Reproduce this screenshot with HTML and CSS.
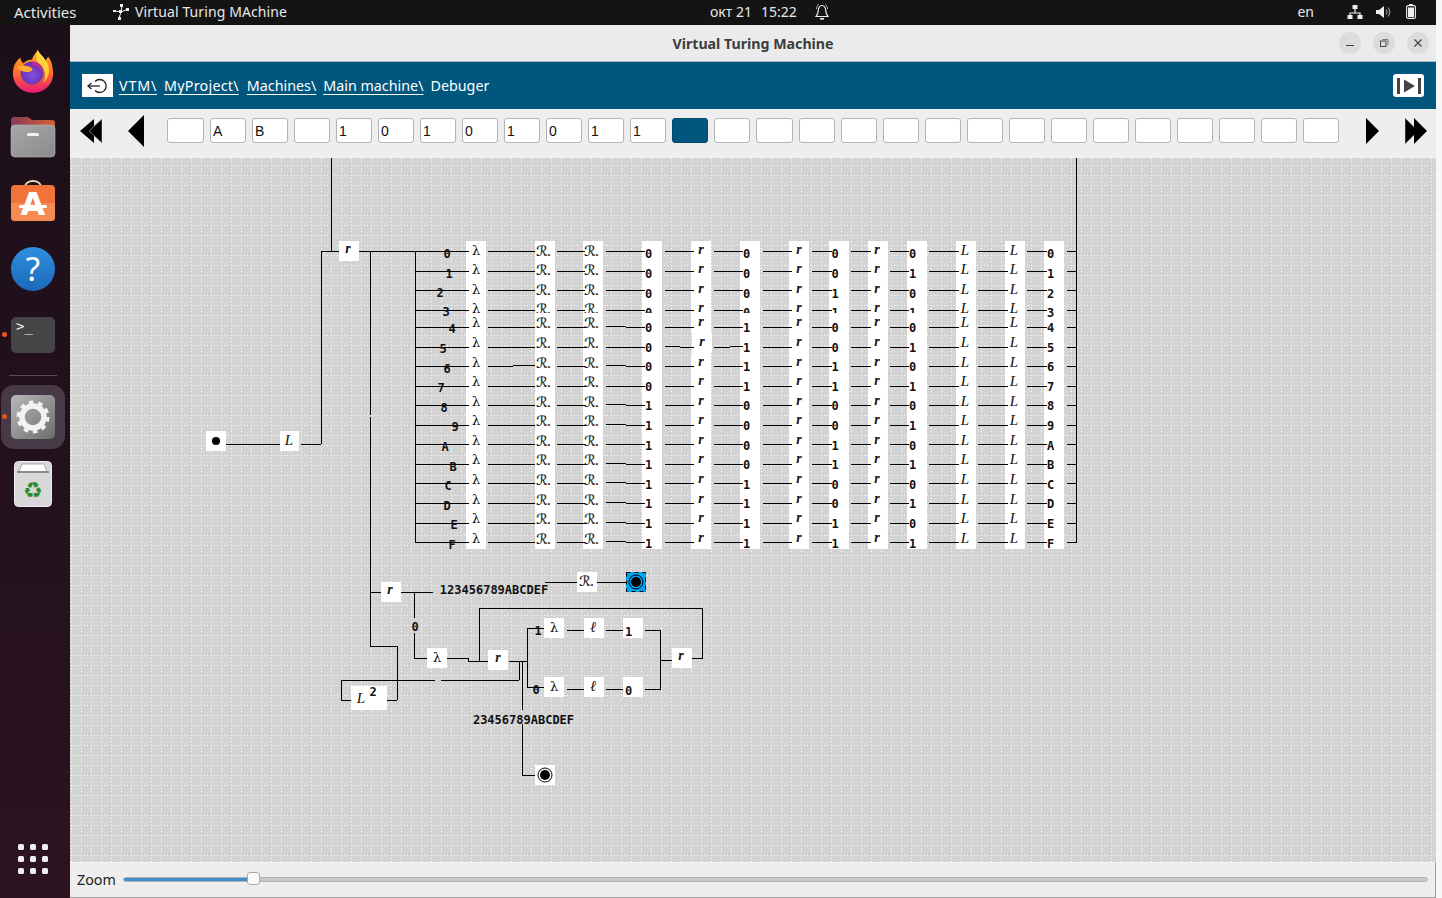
FILE: index.html
```html
<!DOCTYPE html>
<html>
  <head>
    <meta charset="UTF-8"/>
    <title>Virtual Turing Machine</title>
    <link rel="stylesheet" href="styles.css">
  </head>
  <body>
    <div class="screen">
      <header class="topbar">
        <span class="activities">Activities</span>
        <span class="appmenu">
          <svg width="18" height="18" viewBox="0 0 18 18" class="appicon">
            <path d="M2 8 L8 9 L9 3 M8 9 L15 6 M8 9 L6 15" stroke="#eee" stroke-width="1" fill="none"/>
            <g fill="#eee">
              <rect x="7" y="1" width="3" height="3"/><rect x="0" y="7" width="3" height="2"/>
              <rect x="6" y="7" width="3" height="3"/><rect x="13" y="5" width="3" height="3"/>
              <rect x="5" y="14" width="3" height="3"/>
            </g>
          </svg>
          Virtual Turing MAchine
        </span>
        <span class="clock">
          <span>окт 21</span><span class="time">15:22</span>
          <svg width="16" height="18" viewBox="0 0 16 18" class="bell">
            <path d="M8 2.5 C5 2.5 4.4 5 4.2 8 C4 11 3 12 2 13.5 H14 C13 12 12 11 11.8 8 C11.6 5 11 2.5 8 2.5 Z" fill="none" stroke="#eee" stroke-width="1.2"/>
            <path d="M2.5 6 C2.6 4 3.4 2.4 4.6 1.4 M13.5 6 C13.4 4 12.6 2.4 11.4 1.4" fill="none" stroke="#bbb" stroke-width="1"/>
            <rect x="6" y="15" width="4" height="1.6" fill="#eee"/>
          </svg>
        </span>
        <span class="tray">
          <span class="lang">en</span>
          <svg width="16" height="14" viewBox="0 0 16 14" class="net">
            <path d="M8 4 V8 M3 11 V8 H13 V11" stroke="#eee" stroke-width="1.2" fill="none"/>
            <g fill="#eee"><rect x="5.5" y="0" width="5" height="4"/><rect x="0.5" y="10" width="5" height="4"/><rect x="10.5" y="10" width="5" height="4"/></g>
          </svg>
          <svg width="16" height="14" viewBox="0 0 16 14" class="vol">
            <path d="M0 5 H3 L8 1 V13 L3 9 H0 Z" fill="#eee"/>
            <path d="M10 4.5 Q12 7 10 9.5 M12 2.5 Q15.5 7 12 11.5" fill="none" stroke="#999" stroke-width="1.2"/>
          </svg>
          <svg width="10" height="15" viewBox="0 0 10 15" class="batt">
            <rect x="3" y="0" width="4" height="2" fill="#eee"/>
            <rect x="0.6" y="1.6" width="8.8" height="12.8" rx="1.5" fill="none" stroke="#eee" stroke-width="1.1"/>
            <rect x="2" y="3.5" width="6" height="9.5" fill="#eee"/>
          </svg>
        </span>
      </header>

      <div class="desktop">
        <nav class="dock">
          <div class="slot">
            <svg width="44" height="44" viewBox="0 0 46 46">
              <defs>
                <linearGradient id="foxBody" x1="0" y1="0" x2="0" y2="1">
                  <stop offset="0" stop-color="#ffb32c"/><stop offset="0.55" stop-color="#ff6a2b"/><stop offset="1" stop-color="#e5177b"/>
                </linearGradient>
                <radialGradient id="foxCore" cx="0.5" cy="0.6" r="0.6">
                  <stop offset="0" stop-color="#7a50e0"/><stop offset="1" stop-color="#6b2fa8"/>
                </radialGradient>
              </defs>
              <path d="M2 26 C2 17 6 12 10 9 C10 12 11 14 13 15 C16 12 19 11 22 11 C23 7 26 4 28 1 C30 6 34 7 36 13 C37 10 38 9 39 8 C43 13 44 20 44 26 C44 38 34 46 23 46 C12 46 2 38 2 26 Z" fill="url(#foxBody)"/>
              <path d="M28 1 C30 6 35 8 38 15 C41 21 40 30 34 35 C38 27 35 19 29 15 C26 12 26 6 28 1 Z" fill="#ffd43a"/>
              <circle cx="22" cy="25" r="12" fill="url(#foxCore)"/>
              <path d="M6 19 C10 16 18 17 22 20 C24 22 20 24 17 24 C13 24 10 23 6 19 Z" fill="#ffab2e"/>
              <path d="M22 13 C28 13 34 18 34 26 C31 20 27 17 22 17 Z" fill="#c02c9a"/>
            </svg>
          </div>
          <div class="slot">
            <svg width="46" height="42" viewBox="0 0 46 42">
              <defs>
                <linearGradient id="folderBack" x1="0" y1="0" x2="1" y2="0">
                  <stop offset="0" stop-color="#8a3a5a"/><stop offset="1" stop-color="#d5602d"/>
                </linearGradient>
                <linearGradient id="folderFront" x1="0" y1="0" x2="1" y2="1">
                  <stop offset="0" stop-color="#a8a8a8"/><stop offset="1" stop-color="#8a8a8a"/>
                </linearGradient>
              </defs>
              <path d="M1 4 Q1 1 4 1 H18 L22 4 H42 Q45 4 45 7 V20 H1 Z" fill="url(#folderBack)"/>
              <rect x="1" y="9" width="44" height="32" rx="4" fill="url(#folderFront)" stroke="#bbb" stroke-width="0.6"/>
              <rect x="17" y="17" width="12" height="3" rx="1.5" fill="#f2f2f2"/>
            </svg>
          </div>
          <div class="slot">
            <svg width="46" height="46" viewBox="0 0 46 46">
              <path d="M15 7 C15 -1 31 -1 31 7" fill="none" stroke="#f3d5bb" stroke-width="1.8"/>
              <rect x="1" y="5" width="44" height="36" rx="4" fill="#f0743a"/>
              <path d="M1 23 H45 V37 Q45 41 41 41 H5 Q1 41 1 37 Z" fill="#f58a52"/>
              <text x="23" y="35" class="storeletter">A</text>
              <rect x="9" y="25" width="28" height="3" rx="1.5" fill="#fff"/>
            </svg>
          </div>
          <div class="slot">
            <svg width="46" height="46" viewBox="0 0 46 46">
              <defs>
                <linearGradient id="helpBlue" x1="0" y1="0" x2="0" y2="1">
                  <stop offset="0" stop-color="#2f8fe0"/><stop offset="1" stop-color="#1d68b8"/>
                </linearGradient>
              </defs>
              <circle cx="23" cy="23" r="22" fill="url(#helpBlue)"/>
              <text x="23" y="35" class="helpmark">?</text>
            </svg>
          </div>
          <div class="slot">
            <span class="running"></span>
            <div class="termicon"><span>&gt;_</span></div>
          </div>
          <hr class="dockline"/>
          <div class="slot slot-active">
            <span class="running"></span>
            <div class="gearicon">
              <svg width="34" height="34" viewBox="0 0 34 34">
                <circle cx="17" cy="17" r="11" fill="none" stroke="#f2f2f2" stroke-width="5.5"/>
                <circle cx="17" cy="17" r="14.5" fill="none" stroke="#f2f2f2" stroke-width="4" stroke-dasharray="4.55 4.56"/>
              </svg>
            </div>
          </div>
          <div class="slot">
            <svg width="38" height="46" viewBox="0 0 38 46">
              <rect x="0.5" y="0.5" width="37" height="45" rx="4" fill="#d8d8d8" stroke="#eee"/>
              <path d="M5 11 L8 3 H30 L33 11 Z" fill="#fff" stroke="#999" stroke-width="0.8"/>
              <rect x="3" y="10" width="32" height="2" fill="#8a8a8a"/>
              <text x="19" y="37" class="recycle">♻</text>
            </svg>
          </div>
          <div class="appgrid">
            <i></i><i></i><i></i><i></i><i></i><i></i><i></i><i></i><i></i>
          </div>
        </nav>

        <main class="window">
          <div class="titlebar">
            <span class="wintitle">Virtual Turing Machine</span>
            <div class="winbtns">
              <span class="winbtn"><svg width="10" height="10" viewBox="0 0 10 10"><rect x="1" y="7" width="8" height="1" fill="#444"/></svg></span>
              <span class="winbtn"><svg width="10" height="10" viewBox="0 0 10 10"><rect x="1.5" y="3" width="5.5" height="5.5" fill="none" stroke="#444"/><path d="M3.5 1.5 H9 V7" fill="none" stroke="#777"/></svg></span>
              <span class="winbtn"><svg width="10" height="10" viewBox="0 0 10 10"><path d="M1.5 1.5 L8.5 8.5 M8.5 1.5 L1.5 8.5" stroke="#444" stroke-width="1.2"/></svg></span>
            </div>
          </div>

          <div class="pathbar">
            <button class="backbtn">
              <svg width="24" height="16" viewBox="0 0 24 16">
                <path d="M9 3.5 A6.5 6.5 0 1 1 9 12.5" fill="none" stroke="#222" stroke-width="1.3"/>
                <path d="M2 8 H14" stroke="#222" stroke-width="1.3"/>
                <path d="M5.5 5 L2 8 L5.5 11" fill="none" stroke="#222" stroke-width="1.3"/>
              </svg>
            </button>
            <a class="crumb crumb-vtm">VTM\</a>
            <a class="crumb crumb-project">MyProject\</a>
            <a class="crumb crumb-machines">Machines\</a>
            <a class="crumb crumb-main">Main machine\</a>
            <span class="crumb-here">Debuger</span>
            <button class="stepbtn">
              <svg width="24" height="16" viewBox="0 0 24 16">
                <rect x="0" y="0" width="3" height="16" fill="#444"/>
                <rect x="21" y="0" width="3" height="16" fill="#444"/>
                <path d="M7 1.5 L18 8 L7 14.5 Z" fill="#444"/>
              </svg>
            </button>
          </div>

          <div class="tapebar">
            <svg class="arrow arrow-ff" width="22" height="24" viewBox="0 0 22 24">
              <path d="M14 0 L0 12 L14 24 Z" fill="#000"/>
              <path d="M22 0 L9 12 L22 24 Z" fill="#000" stroke="#888" stroke-width="0.8"/>
            </svg>
            <svg class="arrow arrow-one" width="16" height="32" viewBox="0 0 16 32"><path d="M16 0 L0 16 L16 32 Z" fill="#000"/></svg>
            <div class="tape">
              <span class="cell cell-wide"></span>
              <span class="cell">A</span>
              <span class="cell">B</span>
              <span class="cell"></span>
              <span class="cell">1</span>
              <span class="cell">0</span>
              <span class="cell">1</span>
              <span class="cell">0</span>
              <span class="cell">1</span>
              <span class="cell">0</span>
              <span class="cell">1</span>
              <span class="cell">1</span>
              <span class="cell cell-head"></span>
              <span class="cell"></span>
              <span class="cell cell-wide"></span>
              <span class="cell"></span><span class="cell"></span><span class="cell"></span>
              <span class="cell"></span><span class="cell"></span><span class="cell"></span>
              <span class="cell"></span><span class="cell"></span><span class="cell"></span>
              <span class="cell"></span><span class="cell"></span><span class="cell"></span>
              <span class="cell"></span>
            </div>
            <svg class="arrow arrow-next" width="13" height="26" viewBox="0 0 13 26"><path d="M0 0 L13 13 L0 26 Z" fill="#000"/></svg>
            <svg class="arrow arrow-end" width="22" height="26" viewBox="0 0 22 26">
              <path d="M0 0 L13 13 L0 26 Z" fill="#000" stroke="#888" stroke-width="0.8"/>
              <path d="M9 0 L22 13 L9 26 Z" fill="#000"/>
            </svg>
          </div>

          <svg id="board" class="board" width="1366" height="704" viewBox="70 158 1366 704">
            <defs>
              <pattern id="dots" x="70" y="160" width="10" height="10" patternUnits="userSpaceOnUse">
                <g fill="#fff">
                  <rect x="1" y="5" width="1" height="1"/><rect x="4" y="5" width="1" height="1"/>
                  <rect x="7" y="5" width="1" height="1"/>
                  <rect x="1" y="1" width="1" height="1"/><rect x="1" y="8" width="1" height="1"/>
                </g>
              </pattern>
            </defs>
            <rect x="70" y="158" width="1366" height="704" fill="#d3d3d3"/>
            <rect x="70" y="158" width="1366" height="704" fill="url(#dots)"/>
          </svg>

          <div class="zoombar">
            <span class="zoomlabel">Zoom</span>
            <div class="slider">
              <div class="slider-fill"></div>
              <div class="slider-thumb"></div>
            </div>
          </div>
        </main>
      </div>
    </div>
    <script src="diagram.js"></script>
  </body>
</html>
```

FILE: styles.css
```css
html, body { padding: 0; margin: 0; background: #f7f7f7; }
body { font-family: "Noto Sans", "Open Sans", sans-serif; }
svg { display: block; }

.screen {
    width: 1436px;
    height: 898px;
    display: flex;
    flex-direction: column;
    overflow: hidden;
}

/* top bar */
.topbar {
    height: 25px;
    box-sizing: border-box;
    padding-bottom: 2px;
    background: #141414;
    color: #e8e8e8;
    font-size: 14px;
    display: flex;
    align-items: center;
    flex: none;
}
.activities { margin-left: 14px; width: 99px; font-size: 15px; }
.appmenu { display: flex; align-items: center; letter-spacing: .1px; }
.appicon { margin-right: 4px; }
.clock {
    display: flex;
    align-items: center;
    margin-left: 423px;
}
.time { margin-left: 9px; }
.bell { margin-left: 17px; }
.tray { display: flex; align-items: center; margin-left: auto; margin-right: 20px; }
.lang { margin-right: 33px; }
.net { margin-right: 13px; }
.vol { margin-right: 14px; }

.desktop { flex: 1; display: flex; min-height: 0; }

/* dock */
.dock {
    width: 70px;
    flex: none;
    background: linear-gradient(#1b0f19, #2c1322);
    display: flex;
    flex-direction: column;
    align-items: center;
    padding: 13px 4px 0 0;
    box-sizing: border-box;
}
.slot {
    width: 64px;
    height: 66px;
    display: flex;
    align-items: center;
    justify-content: center;
    position: relative;
    flex: none;
}
.slot-active {
    background: #483946;
    border-radius: 13px;
    height: 64px;
    margin-bottom: 2px;
}
.running {
    position: absolute;
    left: 1px;
    top: 50%;
    width: 5px;
    height: 5px;
    margin-top: -3px;
    border-radius: 50%;
    background: #e95420;
}
.termicon {
    width: 44px;
    height: 36px;
    background: #454545;
    border-radius: 5px;
    box-sizing: border-box;
    color: #f5f5f5;
    font: 14px "DejaVu Sans Mono", monospace;
    padding: 1px 0 0 5px;
}
.gearicon {
    width: 44px;
    height: 44px;
    border-radius: 5px;
    background: linear-gradient(135deg, #b8b8b8, #6d6d6d);
    display: flex;
    align-items: center;
    justify-content: center;
}
.dockline {
    width: 48px;
    margin: 7px 0 9px;
    border: 0;
    border-top: 1px solid #5b4b57;
}
.storeletter { font: bold 32px "DejaVu Sans", sans-serif; fill: #fff; text-anchor: middle; }
.helpmark { font: 33px "Noto Sans", sans-serif; fill: #fff; text-anchor: middle; }
.recycle { font: 22px "DejaVu Sans", sans-serif; fill: #2c8a2c; text-anchor: middle; }
.appgrid {
    margin-top: auto;
    margin-bottom: 24px;
    display: grid;
    grid-template-columns: repeat(3, 6px);
    gap: 6px;
}
.appgrid i { width: 6px; height: 6px; border-radius: 1.5px; background: #efefef; display: block; }

/* window */
.window {
    flex: 1;
    min-width: 0;
    display: flex;
    flex-direction: column;
    background: #eee;
}
.titlebar {
    height: 37px;
    flex: none;
    background: #ebebeb;
    display: flex;
    align-items: center;
    justify-content: center;
    position: relative;
    box-sizing: border-box;
    border-bottom: 1px solid #a9b7bf;
}
.wintitle { font-size: 14.2px; font-weight: 700; color: #3d3d3d; }
.winbtns {
    position: absolute;
    right: 7px;
    top: 7px;
    display: flex;
    gap: 12px;
}
.winbtn {
    width: 22px;
    height: 22px;
    border-radius: 50%;
    background: #dcdcdc;
    display: flex;
    align-items: center;
    justify-content: center;
}

.pathbar {
    height: 47px;
    flex: none;
    background: #00567c;
    display: flex;
    align-items: center;
    padding: 0 12px;
    color: #fff;
    font-size: 14.3px;
}
.backbtn {
    width: 31px;
    height: 23px;
    padding: 0;
    border: 0;
    background: #fff;
    display: flex;
    align-items: center;
    justify-content: center;
}
.crumb { text-decoration: underline; text-underline-offset: 3px; }
.crumb-vtm { margin-left: 6px; letter-spacing: .8px; }
.crumb-project { margin-left: 7px; letter-spacing: .25px; }
.crumb-machines { margin-left: 8px; }
.crumb-main { margin-left: 7px; }
.crumb-here { margin-left: 7px; }
.stepbtn {
    margin-left: auto;
    width: 31px;
    height: 23px;
    padding: 0;
    border: 0;
    border-radius: 3px;
    background: #fff;
    display: flex;
    align-items: center;
    justify-content: center;
}

.tapebar {
    height: 49px;
    flex: none;
    box-sizing: border-box;
    padding-bottom: 6px;
    background: #eee;
    display: flex;
    align-items: center;
}
.arrow { flex: none; }
.arrow-ff { margin-left: 10px; }
.arrow-one { margin-left: 26px; }
.tape { display: flex; gap: 6px; margin-left: 23px; }
.arrow-next { margin-left: 27px; }
.arrow-end { margin-left: 26px; }
.cell {
    width: 36px;
    height: 25px;
    box-sizing: border-box;
    border: 1px solid #b4b4b4;
    border-radius: 3px;
    background: #fff;
    font: 14px/24px "Liberation Sans", sans-serif;
    color: #111;
    padding-left: 2px;
}
.cell-wide { width: 37px; }
.cell-head { background: #00567c; border-color: #004a6c; }

.board { flex: none; }
.wires { fill: none; stroke: #000; stroke-width: 1; shape-rendering: crispEdges; }
.mark { font: bold 12px "DejaVu Sans Mono", monospace; fill: #111; text-anchor: middle; }
.sym { fill: #111; text-anchor: middle; }
.sym-r { font: italic bold 14px "Liberation Serif", serif; }
.sym-lambda { font: 13px "DejaVu Serif", serif; }
.sym-script { font: italic 14px "DejaVu Sans", sans-serif; stroke: #111; stroke-width: .2; }
.sym-big-l { font: italic 15px "Liberation Serif", serif; }
.sym-small { font: italic 15px "Liberation Serif", serif; }

.zoombar {
    flex: 1;
    min-height: 0;
    box-sizing: border-box;
    background: #eee;
    border-top: 1px solid #f6f6f6;
    border-right: 1px solid #999;
    border-bottom: 1px solid #a5a5a5;
    padding: 0 0 1px 7px;
    display: flex;
    align-items: center;
}
.zoomlabel { font-size: 14.3px; color: #222; width: 46px; margin-bottom: 1px; }
.slider {
    width: 1305px;
    height: 5px;
    background: #c9c9c9;
    border: 1px solid #b3b3b3;
    border-radius: 3px;
    box-sizing: border-box;
    position: relative;
}
.slider-fill {
    width: 130px;
    height: 100%;
    background: #3b8ed0;
    border-radius: 3px;
}
.slider-thumb {
    position: absolute;
    left: 123px;
    top: -6px;
    width: 13px;
    height: 13px;
    box-sizing: border-box;
    background: #fafafa;
    border: 1px solid #aaa;
    border-radius: 3px;
}
```

FILE: diagram.js
```js
// builds the machine diagram on the board svg, all coords are screen pixels
var NS = 'http://www.w3.org/2000/svg';
var board = document.getElementById('board');

function add(tag, attrs, txt) {
    var el = document.createElementNS(NS, tag);
    for (var k in attrs) el.setAttribute(k, attrs[k]);
    if (txt !== undefined) el.textContent = txt;
    board.appendChild(el);
    return el;
}
function box(x, y, w, h, fill) {
    add('rect', { x: x, y: y, width: w, height: h, fill: fill || '#fff' });
}
function hl(x1, x2, y) { return 'M' + x1 + ' ' + (y + .5) + 'H' + x2; }
function vl(x, y1, y2) { return 'M' + (x + .5) + ' ' + y1 + 'V' + y2; }
function wires(parts) { add('path', { d: parts.join(''), 'class': 'wires' }); }
function mark(x, y, s) { add('text', { x: x, y: y, 'class': 'mark' }, s); }
function sym(kind, x, y) {
    if (kind == 'r') add('text', { x: x, y: y + 3, 'class': 'sym sym-r' }, 'r');
    if (kind == 'l') add('text', { x: x, y: y + 4, 'class': 'sym sym-lambda' }, 'λ');
    if (kind == 'R') add('text', { x: x, y: y + 5, 'class': 'sym sym-script' }, 'ℛ.');
    if (kind == 'L') add('text', { x: x, y: y + 4, 'class': 'sym sym-big-l' }, 'L');
    if (kind == 'e') add('text', { x: x, y: y + 4, 'class': 'sym sym-small' }, 'ℓ');
}
function target(x, y) {
    add('circle', { cx: x, cy: y, r: 7, fill: 'none', stroke: '#000' });
    add('circle', { cx: x, cy: y, r: 5, fill: '#000' });
}

var centers = [251, 270, 290, 309, 323, 343, 363, 382, 402, 421, 441, 460, 480, 500, 519, 539];
var lines = [251, 271, 290, 310, 327, 347, 366, 386, 405, 425, 444, 464, 483, 503, 523, 542];
var bases = [258, 278, 298, 317, 332, 352, 371, 391, 410, 430, 450, 469, 489, 508, 528, 548];
var labelX = [447, 449, 440, 446, 452, 443, 447, 441, 444, 455, 445, 453, 448, 447, 454, 452];
var labelY = [258, 278, 297, 316, 333, 353, 373, 392, 412, 431, 451, 471, 490, 510, 529, 549];
var hex = '0123456789ABCDEF';

// x of the white column, and what stands in it
var columns = [
    [466, 'l', 476], [535, 'R', 544], [583, 'R', 592],
    [642, 'd1', 648.5], [691, 'r', 701], [740, 'd2', 746.5], [789, 'r', 799],
    [829, 'd3', 835], [868, 'r', 877], [907, 'd4', 912.5],
    [956, 'L', 965], [1005, 'L', 1014], [1044, 'hex', 1050.5]
];
var segments = [
    [488, 535], [557, 585], [606, 645], [665, 694], [714, 743], [763, 792],
    [812, 832], [851, 871], [890, 909], [929, 959], [978, 1008], [1027, 1047], [1067, 1076]
];
// lines with a one pixel step in them: row, x1, xstep, x2, y before, y after
var stepped = [
    [4, 606, 626, 645, 326, 327], [5, 665, 680, 694, 346, 347], [5, 714, 730, 743, 347, 346],
    [6, 488, 513, 535, 366, 365], [6, 606, 626, 645, 365, 366], [8, 606, 626, 645, 404, 405],
    [9, 606, 626, 645, 424, 425], [11, 606, 626, 645, 463, 464], [12, 606, 626, 645, 482, 483],
    [13, 606, 626, 645, 502, 503], [14, 606, 626, 645, 522, 523], [15, 606, 626, 645, 541, 542]
];

function digit(kind, row) {
    if (kind == 'hex') return hex[row];
    var bit = { d1: 3, d2: 2, d3: 1, d4: 0 }[kind];
    return (row >> bit) & 1;
}
function isStepped(row, x1) {
    for (var i = 0; i < stepped.length; i++)
        if (stepped[i][0] == row && stepped[i][1] == x1) return stepped[i];
    return null;
}

// buses
wires([
    vl(331, 158, 251), hl(321, 339, 251), vl(321, 251, 444), hl(301, 321, 444), hl(226, 281, 444),
    vl(370, 251, 415), vl(370, 417, 646), vl(415, 251, 543), vl(1076, 158, 543)
]);

for (var r = 0; r < 16; r++) {
    var c = centers[r], y = lines[r];
    for (var i = 0; i < columns.length; i++) {
        // the r in row 5 sits a pixel off its column
        box(columns[i][0] + (r == 5 && i == 4 ? 1 : 0), c - 10, 20, 20);
    }

    var parts = [hl(r == 0 ? 359 : 415, 469, y)];
    for (var s = 0; s < segments.length; s++) {
        var seg = segments[s], st = isStepped(r, seg[0]);
        if (st) {
            parts.push(hl(st[1], st[2], st[4]), hl(st[2], st[3], st[5]));
        } else {
            parts.push(hl(seg[0], seg[1], y));
        }
    }
    wires(parts);

    mark(labelX[r], labelY[r], hex[r]);
    for (i = 0; i < columns.length; i++) {
        var kind = columns[i][1], x = columns[i][2];
        if (kind == 'hex') continue;
        if (kind.charAt(0) == 'd') mark(x, bases[r], digit(kind, r));
        else sym(kind, x + (r == 5 && i == 4 ? 1 : 0), c);
    }
}
// the last column is never cut off by the row below
for (r = 0; r < 16; r++) mark(1050.5, bases[r], hex[r]);

// entry
box(339, 241, 20, 20); sym('r', 348, 250);
box(206, 431, 20, 20); add('circle', { cx: 216, cy: 441, r: 4, fill: '#000' });
box(280, 431, 19, 20); sym('L', 289, 441);

// lower part of the machine
wires([
    hl(371, 381, 592), hl(401, 433, 592), vl(414, 592, 618), vl(414, 633, 658), hl(414, 427, 658),
    hl(545, 577, 582), hl(597, 626, 582),
    hl(370, 397, 646), vl(397, 646, 700), hl(387, 397, 700),
    hl(341, 351, 700), vl(341, 680, 700), hl(341, 435, 680), hl(441, 519, 680), vl(519, 662, 680),
    hl(447, 468, 658), vl(468, 658, 661), hl(468, 488, 661), vl(479, 608, 661), hl(479, 702, 608),
    vl(702, 608, 659), hl(692, 702, 658),
    hl(509, 527, 661), vl(522, 662, 710), vl(522, 724, 775), hl(522, 535, 775),
    vl(527, 628, 688), hl(527, 544, 628), hl(527, 544, 687),
    hl(567, 584, 630), hl(606, 625, 630), hl(645, 660, 630),
    hl(567, 584, 689), hl(606, 625, 689), hl(645, 660, 689),
    vl(660, 630, 690), hl(660, 672, 660)
]);

box(381, 582, 20, 20); sym('r', 390, 591);
box(577, 572, 20, 20); sym('R', 587, 581);
box(626, 572, 20, 20, '#00a5ef');
add('rect', { x: 626.5, y: 572.5, width: 19, height: 19, fill: 'none', stroke: '#000', 'stroke-dasharray': '4 4' });
target(636, 582);

box(427, 648, 20, 20); sym('l', 437, 658);
box(488, 650, 20, 20); sym('r', 498, 659);
box(672, 648, 20, 20); sym('r', 681, 657);
box(351, 686, 36, 24); sym('L', 361, 699); mark(373, 696, '2');

box(544, 618, 20, 20); sym('l', 554, 628);
box(584, 618, 20, 20); sym('e', 593, 628);
box(623, 618, 20, 20); mark(628.5, 636, '1');
box(544, 677, 20, 20); sym('l', 554, 687);
box(584, 677, 20, 20); sym('e', 593, 687);
box(623, 677, 20, 20); mark(628.5, 695, '0');

mark(538, 635, '1');
mark(536, 694, '0');
mark(415, 631, '0');
mark(494, 594, '123456789ABCDEF');
mark(523.5, 724, '23456789ABCDEF');

box(535, 765, 20, 20);
target(545, 775);
```
